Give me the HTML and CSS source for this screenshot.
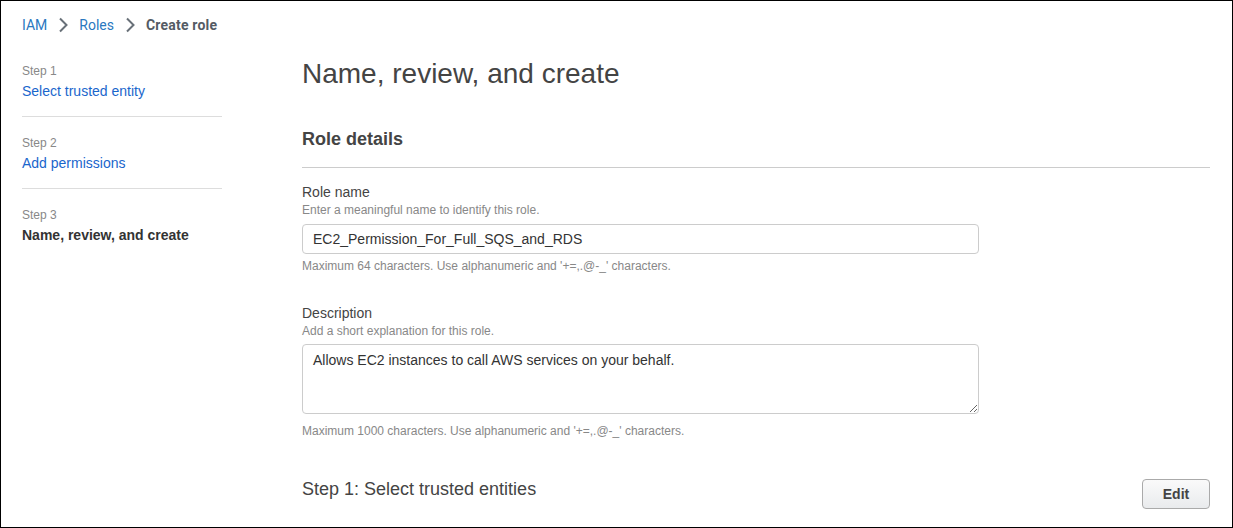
FILE: index.html
```html
<!DOCTYPE html>
<html>
<head>
<meta charset="utf-8">
<link rel="stylesheet" href="styles.css">
</head>
<body>
<div class="frame">
  <nav class="crumbs">
    <a class="crumb-link">IAM</a>
    <svg class="chev" width="10" height="16" viewBox="0 0 10 16"><path d="M2 1.5l6.5 6.5-6.5 6.5" fill="none" stroke="#687078" stroke-width="2"/></svg>
    <a class="crumb-link">Roles</a>
    <svg class="chev" width="10" height="16" viewBox="0 0 10 16"><path d="M2 1.5l6.5 6.5-6.5 6.5" fill="none" stroke="#687078" stroke-width="2"/></svg>
    <span class="crumb-current">Create role</span>
  </nav>
  <div class="layout">
    <aside class="steps">
      <div class="step">
        <div class="step-label">Step 1</div>
        <a class="step-link">Select trusted entity</a>
      </div>
      <div class="step">
        <div class="step-label">Step 2</div>
        <a class="step-link">Add permissions</a>
      </div>
      <div class="step last">
        <div class="step-label">Step 3</div>
        <div class="step-current">Name, review, and create</div>
      </div>
    </aside>
    <main class="main">
      <h1 class="title">Name, review, and create</h1>
      <h2 class="section-title">Role details</h2>
      <div class="field first">
        <div class="label">Role name</div>
        <div class="hint">Enter a meaningful name to identify this role.</div>
        <input class="input" type="text" value="EC2_Permission_For_Full_SQS_and_RDS">
        <div class="constraint">Maximum 64 characters. Use alphanumeric and '+=,.@-_' characters.</div>
      </div>
      <div class="field second">
        <div class="label">Description</div>
        <div class="hint">Add a short explanation for this role.</div>
        <textarea class="textarea">Allows EC2 instances to call AWS services on your behalf.</textarea>
        <div class="constraint c2">Maximum 1000 characters. Use alphanumeric and '+=,.@-_' characters.</div>
      </div>
      <div class="step-row">
        <h2 class="step-title">Step 1: Select trusted entities</h2>
        <button class="btn">Edit</button>
      </div>
    </main>
  </div>
</div>
</body>
</html>
```
FILE: styles.css
```css
* { box-sizing: border-box; }
html, body { margin: 0; padding: 0; background: #fff; }
body { font-family: "Liberation Sans", Arial, sans-serif; color: #444; }
.frame {
  width: 1233px;
  height: 528px;
  border: 1px solid #000;
  padding: 0 22px 0 21px;
  overflow: hidden;
}
.crumbs {
  display: flex;
  align-items: center;
  height: 20px;
  margin-top: 14px;
  font-family: Roboto, "Liberation Sans", sans-serif;
  font-size: 14px;
}
.crumb-link { color: #2a78bf; }
.chev { margin: 0 11px 0 11px; }
.crumb-current { color: #545b64; font-weight: 700; letter-spacing: 0.2px; }
.layout {
  display: grid;
  grid-template-columns: 200px 1fr;
  column-gap: 80px;
  margin-top: 21px;
}
.steps { padding-top: 7px; }
.step {
  padding-bottom: 15px;
  border-bottom: 1px solid #dddddd;
  margin-bottom: 18px;
}
.step.last { border-bottom: none; }
.step-label { font-size: 12px; line-height: 16px; color: #888; margin-bottom: 2px; }
.step-link { display: block; font-size: 14px; line-height: 20px; color: #1a66cc; }
.step-current { font-size: 14px; line-height: 20px; font-weight: 700; color: #333; }
.title {
  margin: 0;
  font-size: 28px;
  line-height: 36px;
  font-weight: 400;
  color: #444;
}
.section-title {
  margin: 35px 0 0;
  font-size: 18px;
  line-height: 24px;
  font-weight: 700;
  color: #444;
  padding-bottom: 16px;
  border-bottom: 1px solid #cccccc;
}
.field.first { margin-top: 14px; }
.field.second { margin-top: 29px; }
.label { font-size: 14px; line-height: 20px; color: #444; }
.hint { font-size: 12px; line-height: 16px; color: #888; }
.input {
  display: block;
  margin-top: 6px;
  width: 677px;
  height: 30px;
  border: 1px solid #cccccc;
  border-radius: 4px;
  padding: 0 10px;
  font-family: "Liberation Sans", Arial, sans-serif;
  font-size: 14px;
  color: #333;
  background: #fff;
}
.textarea {
  display: block;
  margin-top: 5px;
  width: 677px;
  height: 70px;
  border: 1px solid #cccccc;
  border-radius: 4px;
  padding: 7px 10px;
  font-family: "Liberation Sans", Arial, sans-serif;
  font-size: 14px;
  line-height: 16px;
  color: #333;
  resize: vertical;
}
.constraint { margin-top: 4px; font-size: 12px; line-height: 16px; color: #888; }
.constraint.c2 { margin-top: 9px; }
.step-row {
  display: flex;
  justify-content: space-between;
  align-items: flex-start;
  margin-top: 38px;
}
.step-title {
  margin: 0;
  font-size: 18px;
  line-height: 24px;
  font-weight: 400;
  color: #444;
}
.btn {
  margin-top: 2px;
  width: 68px;
  height: 30px;
  border: 1px solid #aaaaaa;
  border-radius: 4px;
  background: linear-gradient(#fafafa, #e9ebed);
  font-family: "Liberation Sans", Arial, sans-serif;
  font-size: 14px;
  font-weight: 700;
  color: #444;
}
```
